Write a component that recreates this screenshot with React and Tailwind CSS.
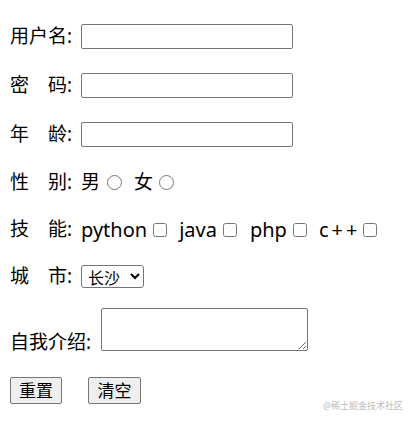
const cjk = "font-['Noto_Sans','Noto_Sans_CJK_SC',sans-serif]"

function Label({ children, w = 'w-[71px]' }) {
  return <span className={`${w} shrink-0 leading-none whitespace-pre`}>{children}</span>
}

function TextInput() {
  return (
    <input
      type="text"
      className="w-[212px] h-[25px] border border-[#767676] rounded-[2px] bg-white px-[2px] text-[14px]"
    />
  )
}

function Check({ className = '' }) {
  return <input type="checkbox" className={`w-[14px] h-[14px] m-0 ${className}`} />
}

function Radio({ className = '' }) {
  return <input type="radio" name="sex" className={`w-[15px] h-[15px] m-0 ${className}`} />
}

export default function App() {
  return (
    <div className={`relative w-[413px] h-[423px] bg-white text-black pl-[10px] pt-[24px] text-[19px] ${cjk}`}>
      <div className="flex items-center h-[25px]">
        <Label>用户名:</Label>
        <TextInput />
      </div>

      <div className="flex items-center h-[25px] mt-[24px]">
        <Label>密　码:</Label>
        <TextInput />
      </div>

      <div className="flex items-center h-[25px] mt-[24px]">
        <Label>年　龄:</Label>
        <TextInput />
      </div>

      {/* gender */}
      <div className="flex items-center h-[25px] mt-[23px]">
        <Label>性　别:</Label>
        <span className="leading-none">男</span>
        <Radio className="ml-[7px]" />
        <span className="leading-none ml-[12px]">女</span>
        <Radio className="ml-[6px]" />
      </div>

      {/* skills */}
      <div className="flex items-center h-[25px] mt-[22px]">
        <Label>技　能:</Label>
        <span className="text-[20px] leading-none">python</span>
        <Check className="ml-[6px]" />
        <span className="text-[20px] leading-none ml-[12px]">java</span>
        <Check className="ml-[6px]" />
        <span className="text-[20px] leading-none ml-[13px]">php</span>
        <Check className="ml-[6px]" />
        <span className="text-[20px] leading-none ml-[12px] tracking-[3px]">c++</span>
        <Check className="ml-[3px]" />
      </div>

      <div className="flex items-center h-[25px] mt-[22px]">
        <Label>城　市:</Label>
        <select className="w-[63px] h-[23px] border border-[#767676] rounded-[3px] bg-white text-[16px] leading-none pl-[2px]">
          <option>长沙</option>
          <option>北京</option>
          <option>上海</option>
        </select>
      </div>

      {/* intro */}
      <div className="flex items-end mt-[19px]">
        <Label w="w-[91px]">
          <span className="relative top-[1px]">自我介绍:</span>
        </Label>
        <textarea className="w-[207px] h-[43px] border border-[#767676] rounded-[2px] bg-white text-[14px] p-[2px]" />
      </div>

      <div className="flex items-center mt-[26px] gap-[26px]">
        <button type="reset" className="w-[52px] h-[27px] bg-[#efefef] border border-[#767676] rounded-[2px] text-[17px] leading-none">
          重置
        </button>
        <button type="button" className="w-[53px] h-[27px] bg-[#efefef] border border-[#767676] rounded-[2px] text-[17px] leading-none">
          清空
        </button>
      </div>

      <span className="absolute left-[323px] top-[401px] text-[9px] leading-none text-[#bdbdbd] whitespace-nowrap">
        @稀土掘金技术社区
      </span>
    </div>
  )
}
